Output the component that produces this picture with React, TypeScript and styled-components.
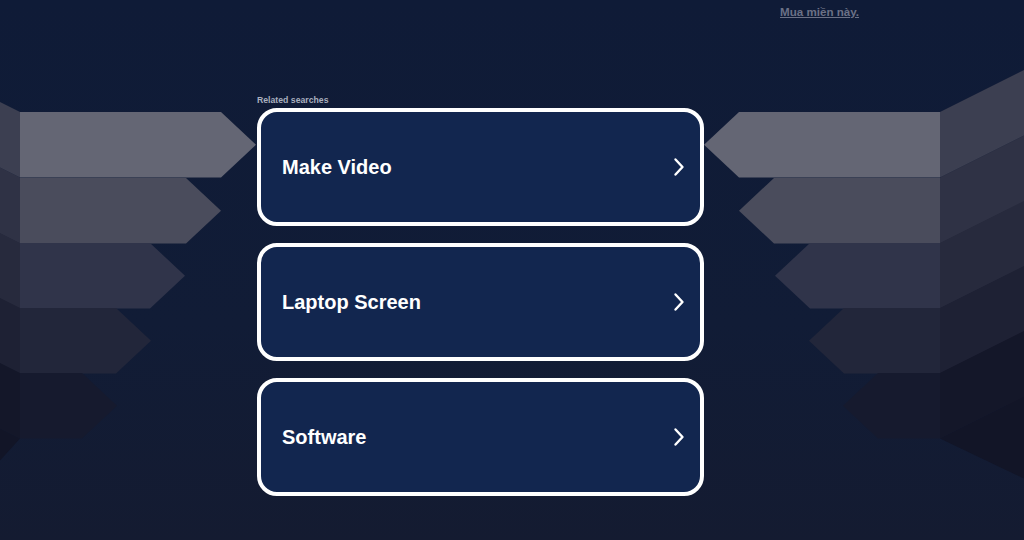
import React from 'react'
import styled, { createGlobalStyle } from 'styled-components'

const GlobalStyle = createGlobalStyle`
  html, body {
    margin: 0;
    padding: 0;
    background: #101b36;
  }
  body {
    font-family: "Liberation Sans", Arial, sans-serif;
  }
`

const Page = styled.div`
  position: relative;
  width: 1024px;
  height: 540px;
  overflow: hidden;
  background: linear-gradient(180deg, #0f1b37 0%, #111c36 60%, #141b31 100%);
`

const Backdrop = styled.svg`
  position: absolute;
  left: 0;
  top: 0;
  width: 1024px;
  height: 540px;
  pointer-events: none;
`

const Content = styled.div`
  position: relative;
  display: flex;
  flex-direction: column;
`

const Header = styled.header`
  height: 22px;
  padding: 2px 0 0 780px;
`

const BuyLink = styled.a`
  font-size: 11.6px;
  font-weight: 700;
  color: #6b7186;
  text-decoration: underline;
`

const Column = styled.main`
  width: 447px;
  margin: 71px 0 0 257px;
  display: flex;
  flex-direction: column;
`

const Label = styled.div`
  font-size: 8.7px;
  font-weight: 700;
  color: #aab0bf;
  line-height: 10px;
  margin-bottom: 3px;
`

const List = styled.div`
  display: flex;
  flex-direction: column;
  gap: 17px;
`

const Card = styled.a`
  box-sizing: border-box;
  height: 118px;
  border: 4px solid #ffffff;
  border-radius: 20px;
  background: #12264f;
  display: flex;
  align-items: center;
  justify-content: space-between;
  padding: 0 15px 0 21px;
  text-decoration: none;
  color: #ffffff;
`

const CardTitle = styled.span`
  font-size: 20px;
  font-weight: 700;
  letter-spacing: 0;
`

const Chevron = () => (
  <svg width="12" height="20" viewBox="0 0 12 20">
    <path d="M2.5 2.5 L9.5 10 L2.5 17.5" fill="none" stroke="#fff" strokeWidth="2.4" strokeLinecap="round" strokeLinejoin="round" />
  </svg>
)

type Row = { top: number; rect: number; fill: string; side: string; under: string }

const rows: Row[] = [
  { top: 112, rect: 201, fill: '#646674', side: '#3c3f51', under: '#2f3245' },
  { top: 178, rect: 166, fill: '#4a4c5c', side: '#2f3245', under: '#282b3e' },
  { top: 243, rect: 130, fill: '#30344a', side: '#272a3d', under: '#1f2235' },
  { top: 308, rect: 96, fill: '#22263a', side: '#1e2134', under: '#181b2e' },
  { top: 373, rect: 62, fill: '#161a2e', side: '#141729', under: '#121527' },
]

const H = 65.5
const TIP = 35

const Shapes = () => (
  <Backdrop viewBox="0 0 1024 540">
    {rows.map((r, i) => {
      const b = r.top + H
      const mid = r.top + H / 2
      const lEnd = 20 + r.rect
      const rStart = 940 - r.rect
      return (
        <g key={i}>
          <polygon points={`0,${b - 10} 20,${b} 0,${b + 22}`} fill={r.under} />
          <polygon points={`0,${r.top - 10} 20,${r.top} 20,${b} 0,${b - 10}`} fill={r.side} />
          <polygon points={`20,${r.top} ${lEnd},${r.top} ${lEnd + TIP},${mid} ${lEnd},${b} 20,${b}`} fill={r.fill} />

          <polygon points={`940,${b} 1024,${b - 42} 1024,${b + 40}`} fill={r.under} />
          <polygon points={`940,${r.top} 1024,${r.top - 42} 1024,${b - 42} 940,${b}`} fill={r.side} />
          <polygon points={`940,${r.top} ${rStart},${r.top} ${rStart - TIP},${mid} ${rStart},${b} 940,${b}`} fill={r.fill} />
        </g>
      )
    })}
  </Backdrop>
)

const searches = ['Make Video', 'Laptop Screen', 'Software']

export default function App() {
  return (
    <>
      <GlobalStyle />
      <Page>
        <Shapes />
        <Content>
          <Header>
            <BuyLink href="#">Mua miền này.</BuyLink>
          </Header>
          <Column>
            <Label>Related searches</Label>
            <List>
              {searches.map((s) => (
                <Card key={s} href="#">
                  <CardTitle>{s}</CardTitle>
                  <Chevron />
                </Card>
              ))}
            </List>
          </Column>
        </Content>
      </Page>
    </>
  )
}
